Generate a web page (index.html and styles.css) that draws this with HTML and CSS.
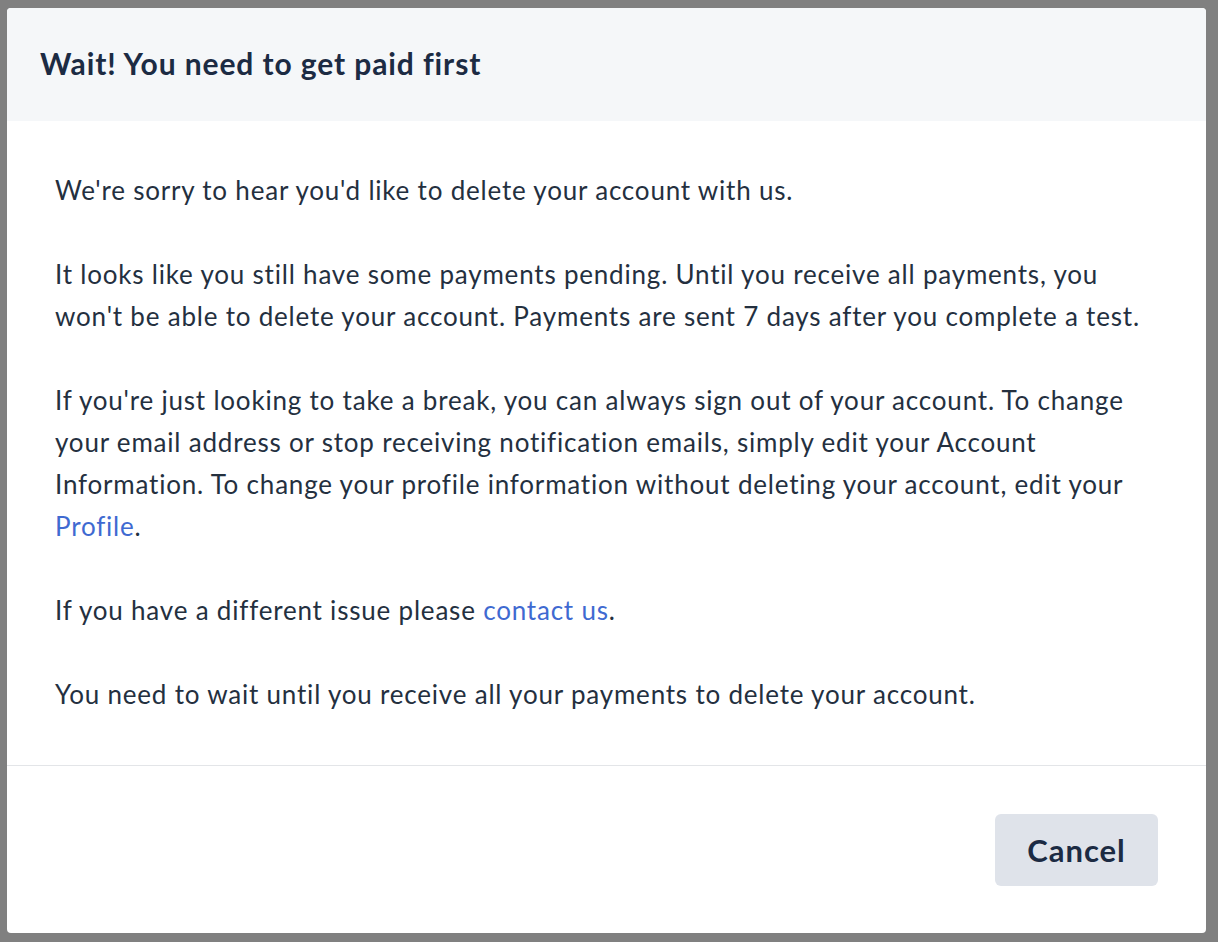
FILE: index.html
```html
<!DOCTYPE html>
<html lang="en">
<head>
    <meta charset="UTF-8">
    <meta name="viewport" content="width=device-width, initial-scale=1.0">
    <title>Delete account</title>
    <link rel="stylesheet" href="styles.css">
</head>
<body>
    <div class="modal">
        <div class="modal-header">
            <h2>Wait! You need to get paid first</h2>
        </div>
        <div class="modal-body">
            <p>We're sorry to hear you'd like to delete your account with us.</p>
            <p>It looks like you still have some payments pending. Until you receive all payments, you won't be able to delete your account. Payments are sent 7 days after you complete a test.</p>
            <p>If you're just looking to take a break, you can always sign out of your account. To change your email address or stop receiving notification emails, simply edit your Account Information. To change your profile information without deleting your account, edit your <a href="#">Profile</a>.</p>
            <p>If you have a different issue please <a href="#">contact us</a>.</p>
            <p>You need to wait until you receive all your payments to delete your account.</p>
        </div>
        <div class="modal-footer">
            <button class="btn-cancel">Cancel</button>
        </div>
    </div>
</body>
</html>
```

FILE: styles.css
```css
html, body {
    height: 100%;
}
body {
    margin: 0;
    padding: 8px 12px 9px 7px;
    box-sizing: border-box;
    background-color: #808080;
    font-family: Lato, "Open Sans", sans-serif;
    color: #24303f;
}
.modal {
    display: flex;
    flex-direction: column;
    height: 100%;
    background-color: #fff;
    border-radius: 4px;
    overflow: hidden;
}
.modal-header {
    height: 113px;
    box-sizing: border-box;
    flex-shrink: 0;
    display: flex;
    align-items: center;
    padding: 0 33px 4px;
    background-color: #f5f7f9;
}
.modal-header h2 {
    margin: 0;
    font-size: 30px;
    font-weight: 700;
    letter-spacing: 0.9px;
    color: #1c2b43;
}
.modal-body {
    flex: 1;
    padding: 48px 48px 49px;
    border-bottom: 1px solid #e3e5e8;
}
.modal-body p {
    margin: 0 0 42px;
    font-size: 26px;
    line-height: 42px;
    letter-spacing: 0.8px;
}
.modal-body p:last-child {
    margin-bottom: 0;
}
.modal-body a {
    color: #3f6ad1;
    text-decoration: none;
}
.modal-footer {
    display: flex;
    justify-content: flex-end;
    padding: 48px 48px 47px;
}
.btn-cancel {
    width: 163px;
    height: 72px;
    border: none;
    border-radius: 6px;
    background-color: #dfe3ea;
    font-family: Lato, "Open Sans", sans-serif;
    font-size: 31px;
    font-weight: 700;
    letter-spacing: 1px;
    color: #1c2b43;
    cursor: pointer;
}
```
